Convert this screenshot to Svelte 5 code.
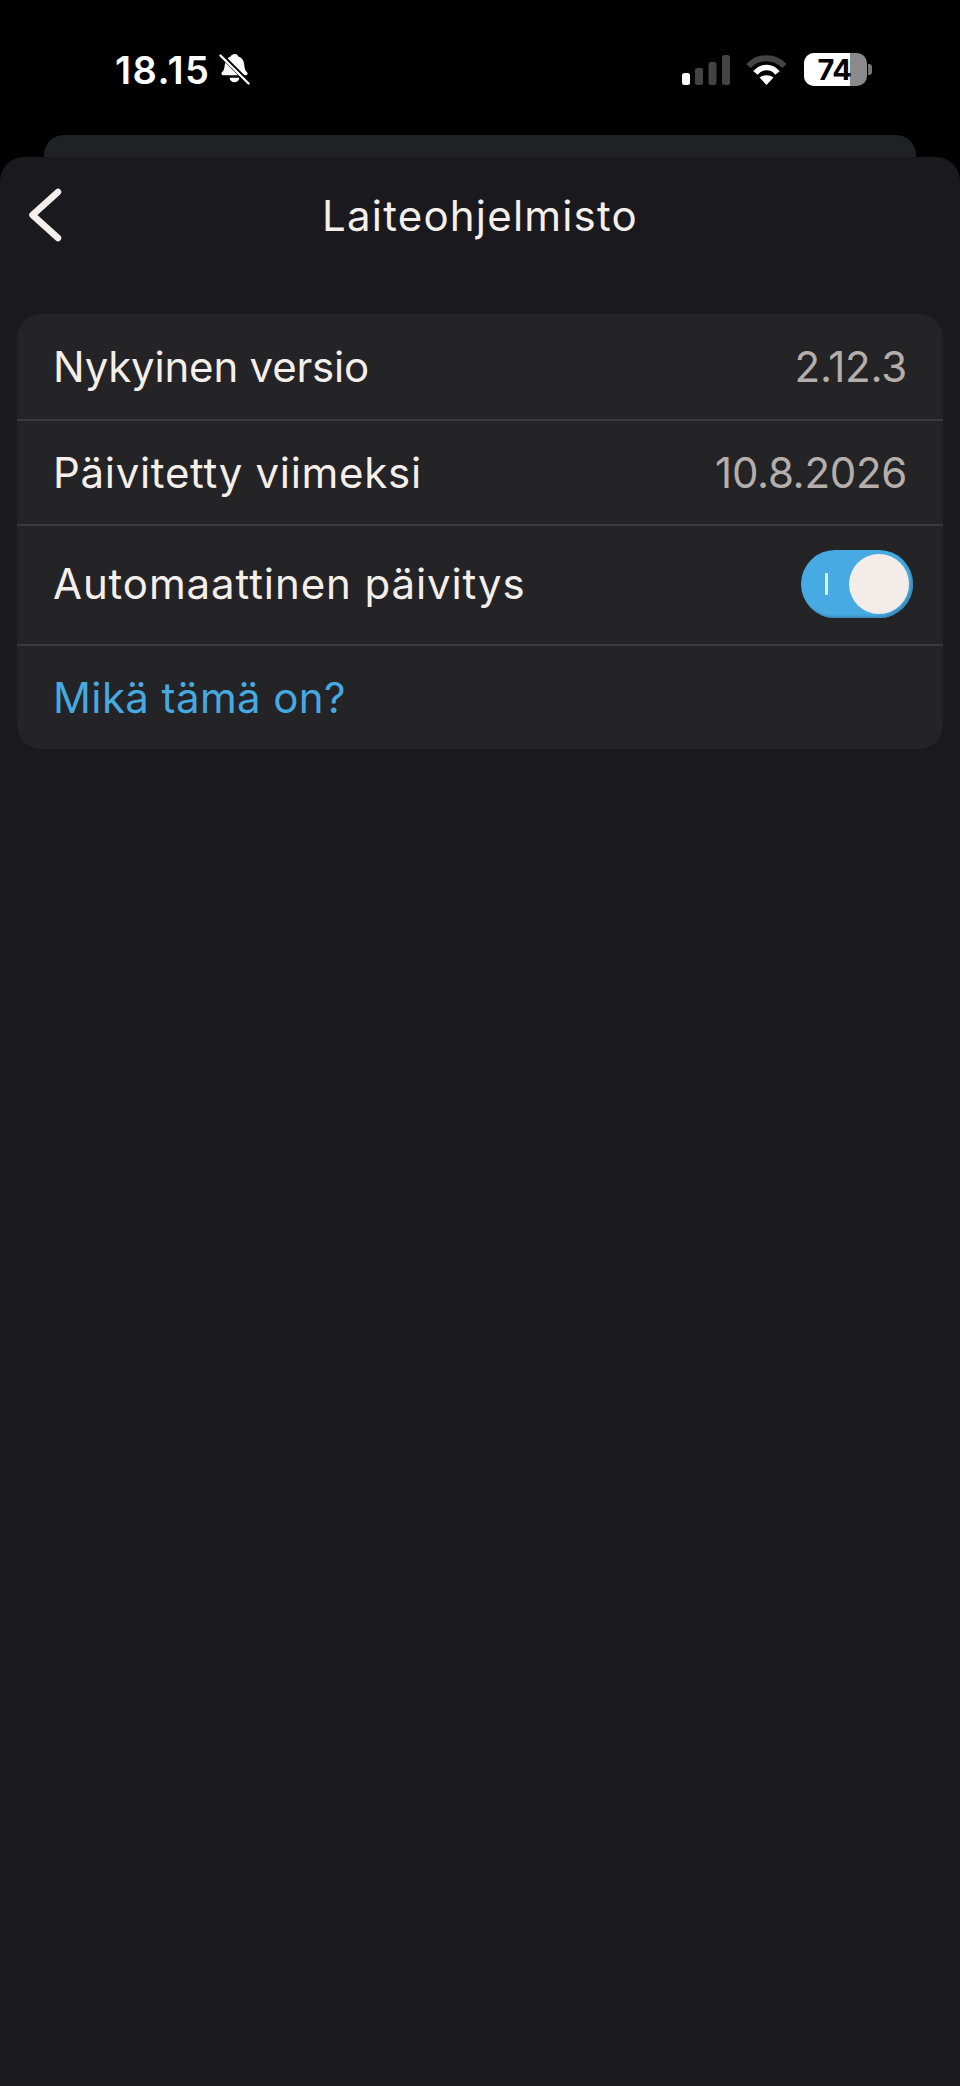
<script>
  const rows = [
    { label: 'Nykyinen versio', value: '2.12.3', cls: 'r1' },
    { label: 'Päivitetty viimeksi', value: '10.8.2026', cls: 'r2' }
  ];
</script>

<main class="screen">
  <header class="status">
    <div class="left">
      <span class="time">18.15</span>
      <svg class="bell" viewBox="0 0 32 32" width="32" height="32" aria-hidden="true">
        <path fill="#fff" d="M16.500 0c1.800 0 2.900 1 3.100 2.300 3.900 1.100 6 4.100 6.400 8.500.3 4 1 6.300 3 8.100 1.100 1.100.4 3.100-1.200 3.100H4.200c-1.600 0-2.300-2-1.200-3.100 2-1.800 2.700-4.100 3-8.100.4-4.400 2.500-7.400 6.400-8.500C12.600 1 14.200 0 16.500 0z"/>
        <path fill="#fff" d="M11 24.500h10c-.2 2.900-2.300 4.700-5 4.700s-4.800-1.800-5-4.700z"/>
        <path d="M1 0l31 31" stroke="#000" stroke-width="4.800" fill="none"/>
        <path d="M1.500 1.500l29 29" stroke="#fff" stroke-width="2.400" stroke-linecap="round" fill="none"/>
      </svg>
    </div>
    <div class="right">
      <svg class="signal" viewBox="0 0 48 30" width="48" height="30" aria-hidden="true">
        <rect x="0" y="18" width="8" height="12" rx="2.500" fill="#fff"/>
        <rect x="13" y="13" width="8" height="17" rx="2.500" fill="#444"/>
        <rect x="26.500" y="7" width="8" height="23" rx="2.500" fill="#444"/>
        <rect x="40" y="0" width="8" height="30" rx="2.500" fill="#444"/>
      </svg>
      <svg class="wifi" viewBox="0 0 42 30" width="42" height="30" aria-hidden="true">
        <path d="M2.500 11C12 .5 29 .5 38.500 11" stroke="#444" stroke-width="6" fill="none"/>
        <path d="M9.500 18C15 10.700 26 10.700 31.500 18" stroke="#fff" stroke-width="5.500" fill="none"/>
        <path d="M20.500 30l-7-7.500c4-3 10-3 14 0z" fill="#fff"/>
      </svg>
      <div class="battery">
        <div class="cell">
          <span class="fill"></span>
          <span class="pct">74</span>
        </div>
        <span class="nub"></span>
      </div>
    </div>
  </header>

  <div class="back-sheet"></div>

  <section class="sheet">
    <div class="nav">
      <button class="back" aria-label="Takaisin">
        <svg viewBox="0 0 36 56" width="36" height="56" aria-hidden="true">
          <path d="M31 5L5.500 28 31 51" stroke="#f5efeb" stroke-width="6.500" stroke-linecap="round" stroke-linejoin="round" fill="none"/>
        </svg>
      </button>
      <h1>Laiteohjelmisto</h1>
    </div>

    <div class="card">
      {#each rows as row}
        <div class="row {row.cls}">
          <span class="label">{row.label}</span>
          <span class="value">{row.value}</span>
        </div>
      {/each}
      <div class="row r3">
        <span class="label">Automaattinen päivitys</span>
        <div class="toggle">
          <span class="tick"></span>
          <span class="knob"></span>
        </div>
      </div>
      <div class="row r4">
        <span class="link">Mikä tämä on?</span>
      </div>
    </div>
  </section>
</main>

<style>
  :global(body) { margin: 0; background: #000; }
  .screen { width: 960px; height: 2086px; background: #000; font-family: Inter, "Liberation Sans", sans-serif; display: flex; flex-direction: column; overflow: hidden; }

  .status { height: 135px; display: flex; justify-content: space-between; box-sizing: border-box; padding: 48px 88px 0 115px; }
  .left { display: flex; align-items: flex-start; height: 44px; gap: 9px; }
  .time { color: #fff; font-size: 38px; font-weight: 600; line-height: 44px; letter-spacing: 1.4px; }
  .bell { margin-top: 6px; width: 31px; height: 31px; }
  .right { display: flex; align-items: flex-start; height: 44px; gap: 16px; }
  .signal { margin-top: 7px; }
  .wifi { margin-top: 7px; }
  .battery { display: flex; align-items: center; margin-top: 5px; height: 33px; }
  .cell { position: relative; width: 63px; height: 33px; border-radius: 10px; background: #8a8a8a; overflow: hidden; display: flex; align-items: center; justify-content: center; }
  .fill { position: absolute; left: 0; top: 0; bottom: 0; width: 46px; background: #fff; }
  .pct { position: relative; color: #000; font-size: 29px; font-weight: 700; line-height: 33px; letter-spacing: -0.3px; margin-left: -2px; }
  .nub { width: 4px; height: 11px; margin-left: 1px; background: #777; border-radius: 0 3px 3px 0; }

  .back-sheet { height: 22px; margin: 0 44px; background: #202124; border-radius: 20px 20px 0 0; flex: none; }

  .sheet { flex: 1; background: #1a1a1e; border-radius: 24px 24px 0 0; padding: 0 17px; }
  .nav { position: relative; height: 157px; }
  .nav h1 { margin: 0; padding-top: 32px; text-align: center; color: #f5efeb; font-size: 42px; line-height: 54px; font-weight: 400; letter-spacing: 1.2px; }
  .back { position: absolute; left: 10px; top: 30px; padding: 0; border: 0; background: none; display: flex; }

  .card { background: #242427; border-radius: 24px; color: #f5efeb; font-size: 42px; }
  .row { display: flex; justify-content: space-between; align-items: center; box-sizing: border-box; padding: 0 36px; border-top: 2px solid #3a3a3d; }
  .r1 { height: 105px; border-top: 0; }
  .r1 .label { letter-spacing: -0.2px; }
  .r2 { height: 105px; }
  .r2 .label { letter-spacing: 0.7px; }
  .r2 .value { letter-spacing: -0.3px; }
  .r3 { height: 120px; padding-right: 30px; padding-bottom: 3px; }
  .r3 .label { letter-spacing: 0.9px; }
  .r4 { height: 105px; }
  .value { color: #b5aeaa; }
  .r1 .value { letter-spacing: -0.2px; }
  .link { color: #46a9e0; letter-spacing: 0.4px; }

  .toggle { position: relative; width: 112px; height: 68px; border-radius: 34px; background: #47aae3; box-shadow: inset -2px -2px 2px #3a8cbc; box-sizing: border-box; display: flex; align-items: center; justify-content: flex-end; padding-right: 4px; }
  .tick { position: absolute; left: 24px; top: 23px; width: 3px; height: 22px; background: #d8f0fb; }
  .knob { width: 60px; height: 60px; border-radius: 50%; background: #f3ece8; }
</style>
